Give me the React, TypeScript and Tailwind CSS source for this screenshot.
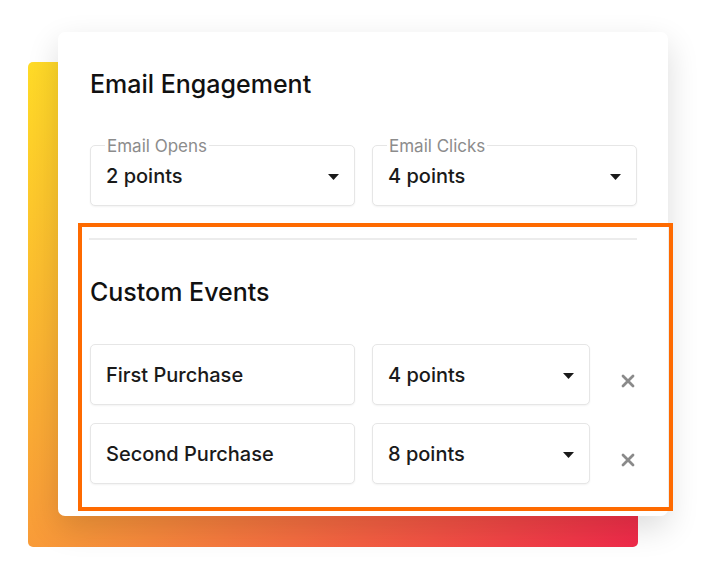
import { useState } from "react";

type PointOption = { label: string; value: string };

const Caret = () => (
  <svg width="11" height="6" viewBox="0 0 11 6" className="mt-[3px] shrink-0">
    <path d="M0 0h11L5.5 6z" fill="#1a1a1a" />
  </svg>
);

const CloseIcon = () => (
  <svg width="14" height="14" viewBox="0 0 14 14">
    <path d="M2 2l10 10M12 2L2 12" stroke="#8a8a8a" strokeWidth="2.8" strokeLinecap="round" />
  </svg>
);

const SelectBox = ({ label, value, className }: { label?: string; value: string; className?: string }) => (
  <div
    className={`relative h-[61px] flex items-center justify-between pl-[15px] pr-[15px] bg-white border border-[#e6e6e6] rounded-[5px] shadow-[0_1px_2px_rgba(0,0,0,0.05)] ${className ?? ""}`}
  >
    {label && (
      <span className="absolute left-[14px] -top-[10px] px-[2px] bg-white text-[17px] leading-[20px] text-[#8c8c8c]">
        {label}
      </span>
    )}
    <span className="text-[20px] leading-[24px] font-medium text-[#1a1a1a]">{value}</span>
    <Caret />
  </div>
);

const TextBox = ({ value }: { value: string }) => (
  <div className="h-[61px] w-[265px] flex items-center px-[15px] bg-white border border-[#e6e6e6] rounded-[5px] shadow-[0_1px_2px_rgba(0,0,0,0.05)]">
    <span className="text-[20px] leading-[24px] font-medium text-[#1a1a1a]">{value}</span>
  </div>
);

const App = () => {
  const [events] = useState<PointOption[]>([
    { label: "First Purchase", value: "4 points" },
    { label: "Second Purchase", value: "8 points" },
  ]);

  return (
    <div className="relative w-[708px] h-[585px] bg-white overflow-hidden font-['Inter',sans-serif]">
      {/* gradient backdrop */}
      <div className="absolute left-[28px] top-[62px] w-[610px] h-[485px] rounded-[5px] bg-[linear-gradient(135deg,#ffdb27_0%,#f8963a_48%,#f0294a_100%)]" />

      <div className="relative ml-[58px] mt-[32px] w-[610px] h-[484px] bg-white rounded-[7px] shadow-[0_12px_32px_rgba(0,0,0,0.14)] pl-[32px] pr-[31px] pt-[37px]">
        <h2 className="text-[25px] leading-[30px] font-medium text-[#111]">Email Engagement</h2>

        <div className="flex gap-[17px] mt-[46px]">
          <SelectBox label="Email Opens" value="2 points" className="w-[265px]" />
          <SelectBox label="Email Clicks" value="4 points" className="w-[265px]" />
        </div>

        <div className="mt-[17px] -ml-[12px] -mr-[36px] border-4 border-[#fe6a00] pl-[8px] pr-[32px] pt-[11px] pb-[23px]">
          <div className="h-[2px] bg-[#ececec] -ml-[1px]" />
          <h2 className="mt-[37px] text-[25px] leading-[30px] font-medium text-[#111]">Custom Events</h2>

          <div className="mt-[37px] flex flex-col gap-[18px]">
            {events.map((ev) => (
              <div key={ev.label} className="flex items-center">
                <TextBox value={ev.label} />
                <SelectBox value={ev.value} className="w-[218px] ml-[17px]" />
                <div className="flex-1 flex justify-center pt-[12px] pl-[28px]">
                  <CloseIcon />
                </div>
              </div>
            ))}
          </div>
        </div>
      </div>
    </div>
  );
};

export default App;
